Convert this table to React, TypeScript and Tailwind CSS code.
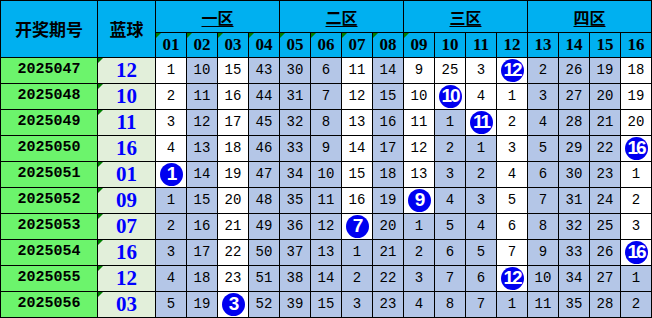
import { Fragment } from "react"

const rows = [
  { id: "2025047", blue: "12", nums: [1, 10, 15, 43, 30, 6, 11, 14, 9, 25, 3, 12, 2, 26, 19, 18], hit: 11, mark: true },
  { id: "2025048", blue: "10", nums: [2, 11, 16, 44, 31, 7, 12, 15, 10, 10, 4, 1, 3, 27, 20, 19], hit: 9, mark: true },
  { id: "2025049", blue: "11", nums: [3, 12, 17, 45, 32, 8, 13, 16, 11, 1, 11, 2, 4, 28, 21, 20], hit: 10, mark: true },
  { id: "2025050", blue: "16", nums: [4, 13, 18, 46, 33, 9, 14, 17, 12, 2, 1, 3, 5, 29, 22, 16], hit: 15, mark: false },
  { id: "2025051", blue: "01", nums: [1, 14, 19, 47, 34, 10, 15, 18, 13, 3, 2, 4, 6, 30, 23, 1], hit: 0, mark: true },
  { id: "2025052", blue: "09", nums: [1, 15, 20, 48, 35, 11, 16, 19, 9, 4, 3, 5, 7, 31, 24, 2], hit: 8, mark: true },
  { id: "2025053", blue: "07", nums: [2, 16, 21, 49, 36, 12, 7, 20, 1, 5, 4, 6, 8, 32, 25, 3], hit: 6, mark: true },
  { id: "2025054", blue: "16", nums: [3, 17, 22, 50, 37, 13, 1, 21, 2, 6, 5, 7, 9, 33, 26, 16], hit: 15, mark: true },
  { id: "2025055", blue: "12", nums: [4, 18, 23, 51, 38, 14, 2, 22, 3, 7, 6, 12, 10, 34, 27, 1], hit: 11, mark: true },
  { id: "2025056", blue: "03", nums: [5, 19, 3, 52, 39, 15, 3, 23, 4, 8, 7, 1, 11, 35, 28, 2], hit: 2, mark: true },
]

// rows (from the top) that stay white in each column
const whiteUntil = [5, 0, 10, 0, 0, 0, 7, 0, 6, 2, 3, 9, 0, 0, 0, 8]

const zones = ["一区", "二区", "三区", "四区"]

function Mark() {
  return <div className="absolute left-0 top-0 w-[5px] h-[5px] bg-[#008000] [clip-path:polygon(0_0,100%_0,0_100%)]" />
}

export default function App() {
  return (
    <div className="w-[652px] h-[318px] bg-white">
      <div className="grid grid-cols-[96px_57px_repeat(16,30px)] grid-rows-[31px_24px_repeat(10,25px)] gap-px p-px bg-black w-[652px]">
        <div className="row-span-2 bg-[#00b0f0] flex items-center justify-center text-[17px] font-bold text-black font-['Noto_Sans_CJK_SC',serif]">
          开奖期号
        </div>
        <div className="row-span-2 bg-[#00b0f0] flex items-center justify-center text-[17px] font-bold text-black font-['Noto_Sans_CJK_SC',serif]">
          蓝球
        </div>
        {zones.map((z) => (
          <div key={z} className="col-span-4 bg-[#00b0f0] flex items-center justify-center text-[16px] font-bold text-black font-['Noto_Sans_CJK_SC',serif]">
            <span className="underline underline-offset-2">{z}</span>
          </div>
        ))}
        {Array.from({ length: 16 }, (_, i) => (
          <div key={i} className="relative bg-[#00b0f0] flex items-center justify-center text-[17px] font-bold text-black font-['Liberation_Serif',serif]">
            {i < 9 && <Mark />}
            {String(i + 1).padStart(2, "0")}
          </div>
        ))}

        {rows.map((r, ri) => (
          <Fragment key={r.id}>
            <div className="bg-[#6cf46c] flex items-center justify-center text-[15px] font-bold text-black font-['Liberation_Mono',monospace]">
              {r.id}
            </div>
            <div className="relative bg-[#e2efda] flex items-center justify-center text-[21px] font-bold text-[#0000ff] font-['Liberation_Serif',serif]">
              {r.mark && <Mark />}
              {r.blue}
            </div>
            {r.nums.map((n, ci) => (
              <div
                key={ci}
                className={`flex items-center justify-center text-[14px] text-black font-['Liberation_Mono',monospace] ${ri < whiteUntil[ci] ? "bg-white" : "bg-[#b4c6e7]"}`}
              >
                {ci === r.hit ? (
                  <span className="w-[23px] h-[23px] rounded-full bg-[#0000f0] text-white flex items-center justify-center text-[19px] font-bold tracking-[-2px] font-['Liberation_Sans',sans-serif]">
                    {n}
                  </span>
                ) : (
                  n
                )}
              </div>
            ))}
          </Fragment>
        ))}
      </div>
    </div>
  )
}
